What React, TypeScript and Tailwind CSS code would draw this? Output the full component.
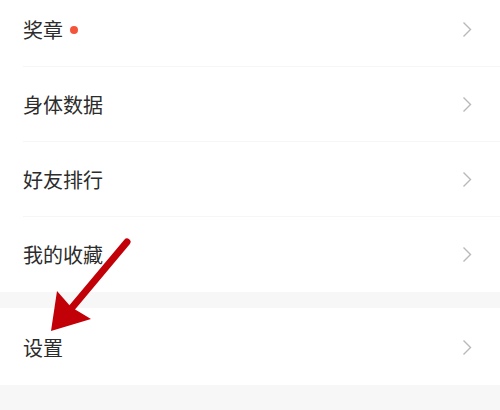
const font = { fontFamily: '"Noto Sans CJK SC", "Noto Sans", sans-serif' };

function Chevron() {
  return (
    <svg width="10" height="17" viewBox="0 0 10 17" fill="none" className="mr-[28px]">
      <path d="M1.5 1.5 L8.5 8.5 L1.5 15.5" stroke="#b8b8b8" strokeWidth="1.4" />
    </svg>
  );
}

function Row({ label, dot, last }: { label: string; dot?: boolean; last?: boolean }) {
  return (
    <div className="relative flex h-[75px] items-center justify-between pl-[23px]">
      <div className="flex items-center">
        <span className="text-[20px] leading-none text-[#2c2c2c]">{label}</span>
        {dot && <span className="ml-[7px] h-[8px] w-[8px] rounded-full bg-[#f4553a]" />}
      </div>
      <Chevron />
      {!last && <div className="absolute bottom-0 left-[23px] right-0 h-px bg-[#f6f6f6]" />}
    </div>
  );
}

export default function App() {
  return (
    <div className="relative h-[410px] w-[500px] overflow-hidden bg-white" style={font}>
      <div className="-mt-[8px]">
        <Row label="奖章" dot />
        <Row label="身体数据" />
        <Row label="好友排行" />
        <Row label="我的收藏" last />
      </div>
      <div className="h-[16px] bg-[#f7f7f7]" />
      <div className="pt-[2px]">
        <Row label="设置" last />
      </div>
      <div className="h-[30px] bg-[#f7f7f7]" />

      {/* red annotation arrow */}
      <svg className="pointer-events-none absolute left-0 top-0" width="500" height="410">
        <line x1="127" y1="242" x2="70" y2="310" stroke="#c20008" strokeWidth="7" strokeLinecap="round" />
        <polygon points="51,331 57,291 71,307 91,319" fill="#c20008" />
      </svg>
    </div>
  );
}
